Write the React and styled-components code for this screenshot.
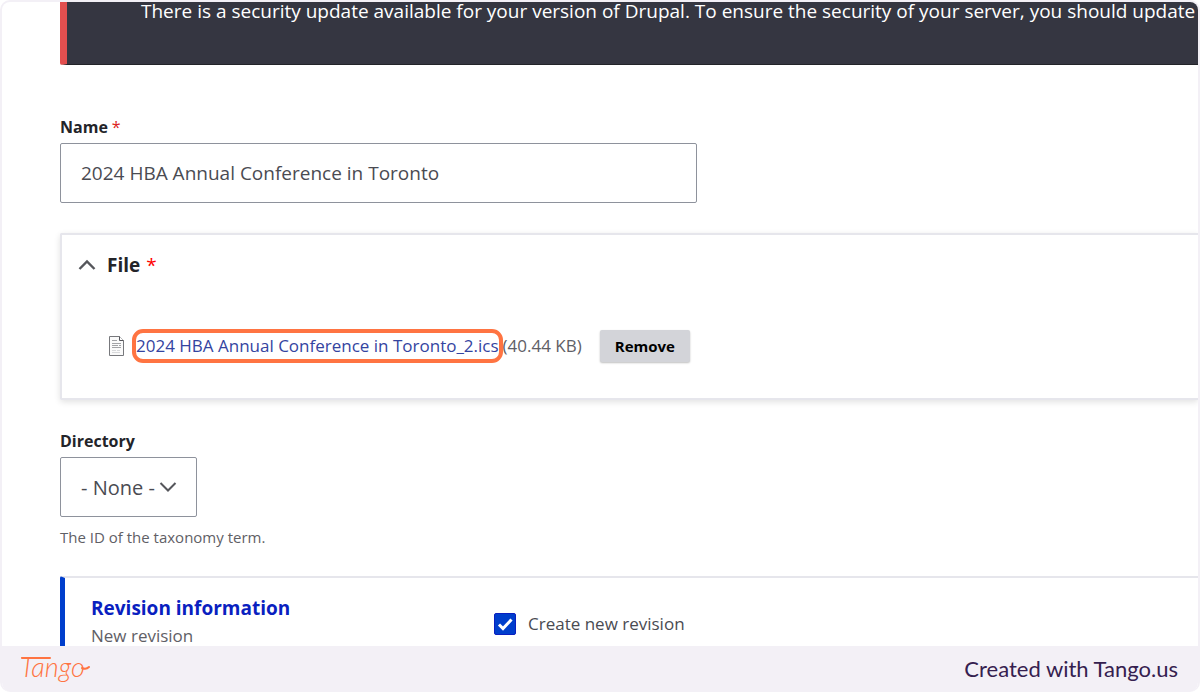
import { useState } from "react";
import styled, { createGlobalStyle } from "styled-components";

const GlobalStyle = createGlobalStyle`
  * {
    box-sizing: border-box;
  }

  body {
    margin: 0;
    background: #ffffff;
    color: #232429;
    font-family: "Open Sans", "Noto Sans", sans-serif;
  }
`;

/* ================= FRAME ================= */

const Frame = styled.div`
  display: flex;
  flex-direction: column;
  height: 100vh;
  border: 2px solid #f3f0f6;
  border-bottom: none;
  border-radius: 10px;
  overflow: hidden;
`;

const Page = styled.main`
  flex: 1;
  min-height: 0;
  padding-left: 58px;
  overflow: hidden;
`;

/* ================= MESSAGE ================= */

const Message = styled.div`
  height: 63px;
  padding-left: 74px;
  border-left: 7px solid #e34f4f;
  border-bottom: 1px solid #232429;
  border-bottom-left-radius: 2px;
  background: #353641;
  color: #ffffff;
  font-size: 19px;
  line-height: 18px;
  white-space: nowrap;
`;

/* ================= FORM ================= */

const Form = styled.form`
  display: flex;
  flex-direction: column;
`;

const Field = styled.div`
  display: flex;
  flex-direction: column;
  align-items: flex-start;
  margin-top: ${(p) => p.$gap}px;
`;

const Label = styled.label`
  margin-bottom: 4px;
  font-size: 16px;
  font-weight: 700;
  line-height: 24px;
`;

const Required = styled.span`
  margin-left: ${(p) => (p.$wide ? 6 : 4)}px;
  color: ${(p) => (p.$wide ? "#ff0000" : "#dc2323")};
  font-weight: 400;
`;

const TextInput = styled.input`
  width: 637px;
  max-width: 100%;
  height: 60px;
  padding: 0 20px;
  border: 1px solid #8e929c;
  border-radius: 2px;
  background: #ffffff;
  color: #4a4b52;
  font-family: inherit;
  font-size: 19px;
`;

const SelectWrap = styled.div`
  position: relative;
  display: flex;
`;

const Select = styled.select`
  width: 137px;
  height: 60px;
  padding: 0 20px;
  border: 1px solid #8e929c;
  border-radius: 2px;
  background: #ffffff;
  color: #4a4b52;
  font-family: inherit;
  font-size: 20px;
  appearance: none;
`;

const SelectArrow = styled.svg`
  position: absolute;
  top: 24px;
  right: 20px;
  pointer-events: none;
`;

const Description = styled.p`
  margin: 8px 0 0;
  color: #5f6066;
  font-size: 15px;
  line-height: 24px;
`;

/* ================= FILE CARD ================= */

const Card = styled.section`
  margin-top: 30px;
  padding: 16px 16px 34px;
  border: 2px solid #e6e6ec;
  border-right: none;
  border-radius: 2px 0 0 2px;
  box-shadow: 0 2px 6px rgba(0, 0, 0, 0.12);
`;

const CardHeader = styled.h2`
  display: flex;
  align-items: center;
  margin: 0;
  font-size: 19px;
  font-weight: 700;
  line-height: 28px;

  svg {
    margin-right: 11px;
  }
`;

const FileRow = styled.div`
  display: flex;
  align-items: center;
  margin-top: 50px;
  margin-bottom: 1px;
  padding-left: 30px;
  font-size: 17px;
  line-height: 24px;
`;

const Highlight = styled.span`
  display: flex;
  align-items: center;
  height: 34px;
  margin-left: 6px;
  border: 4px solid #ff7442;
  border-radius: 11px;
`;

const FileLink = styled.a`
  color: #34449f;
  text-decoration: none;
`;

const FileSize = styled.span`
  color: #5f6066;
`;

const RemoveButton = styled.button`
  height: 32px;
  margin-left: 18px;
  padding: 0 15px;
  border: none;
  border-radius: 2px;
  background: #d3d4d9;
  box-shadow: 0 1px 2px rgba(0, 0, 0, 0.25);
  color: #000000;
  font-family: inherit;
  font-size: 15px;
  font-weight: 700;
`;

/* ================= REVISION ================= */

const Revision = styled.section`
  display: grid;
  grid-template-columns: 403px 1fr;
  margin-top: 27px;
  padding: 16px 0 20px 26px;
  border-top: 2px solid #e6e6ec;
  border-left: 5px solid #003ecc;
  border-top-left-radius: 2px;
`;

const RevisionTitle = styled.h3`
  margin: 0;
  color: #0a1fc0;
  font-size: 19px;
  font-weight: 700;
  line-height: 28px;
`;

const RevisionSummary = styled.p`
  margin: 2px 0 0;
  color: #5f6066;
  font-size: 17px;
  line-height: 24px;
`;

const CheckLabel = styled.label`
  display: flex;
  align-items: center;
  align-self: start;
  gap: 12px;
  margin-top: 18px;
  font-size: 17px;
  line-height: 24px;
  color: #4a4b52;
`;

const CheckHolder = styled.span`
  position: relative;
  display: flex;
`;

const Checkbox = styled.input`
  width: 22px;
  height: 22px;
  margin: 0;
  border: 1px solid #0a1fc0;
  border-radius: 2px;
  background: #ffffff;
  appearance: none;

  &:checked {
    background: #003ecc;
  }
`;

const CheckMark = styled.svg`
  position: absolute;
  inset: 0;
  pointer-events: none;
`;

/* ================= FOOTER ================= */

const Footer = styled.footer`
  display: flex;
  align-items: center;
  justify-content: space-between;
  height: 46px;
  padding: 0 20px 0 18px;
  background: #f3f0f6;
`;

const Logo = styled.svg`
  color: #ff7442;
`;

const Credit = styled.span`
  color: #35204f;
  font-family: Lato, sans-serif;
  font-size: 22px;
  line-height: 28px;
`;

/* ================= COMPONENT ================= */

export default function App() {
  const [name, setName] = useState("2024 HBA Annual Conference in Toronto");
  const [checked, setChecked] = useState(true);

  return (
    <>
      <GlobalStyle />
      <Frame>
        <Page>
          <Message role="alert">
            There is a security update available for your version of Drupal. To ensure the security
            of your server, you should update
          </Message>

          <Form onSubmit={(e) => e.preventDefault()}>
            <Field $gap={50}>
              <Label htmlFor="name">
                Name<Required>*</Required>
              </Label>
              <TextInput id="name" value={name} onChange={(e) => setName(e.target.value)} />
            </Field>

            <Card>
              <CardHeader>
                <svg width="18" height="12" viewBox="0 0 18 12" fill="none">
                  <path d="M1.5 10 9 2.5l7.5 7.5" stroke="#55565b" strokeWidth="2.4" />
                </svg>
                File<Required $wide>*</Required>
              </CardHeader>

              <FileRow>
                <svg width="18" height="22" viewBox="0 0 18 22" fill="none">
                  <path d="M1.5 1.5h10l4 4v15h-14z" fill="#fafafa" stroke="#77787c" />
                  <path d="M11.5 1.5v4h4" fill="#ffffff" stroke="#55565b" />
                  <path
                    d="M4 5.5h5M4 8.5h9M4 10.5h6M11 10.5h2M4 12.5h9"
                    stroke="#a2a3a6"
                  />
                  <path d="M4 15.5h4M9 15.5h3M4 17.5h8" stroke="#d8d9db" />
                </svg>
                <Highlight>
                  <FileLink href="#file">2024 HBA Annual Conference in Toronto_2.ics</FileLink>
                </Highlight>
                <FileSize>(40.44 KB)</FileSize>
                <RemoveButton type="button">Remove</RemoveButton>
              </FileRow>
            </Card>

            <Field $gap={29}>
              <Label htmlFor="directory">Directory</Label>
              <SelectWrap>
                <Select id="directory" defaultValue="none">
                  <option value="none">- None -</option>
                </Select>
                <SelectArrow width="18" height="12" viewBox="0 0 18 12" fill="none">
                  <path d="M1.5 2 9 9.5 16.5 2" stroke="#55565b" strokeWidth="2" />
                </SelectArrow>
              </SelectWrap>
              <Description>The ID of the taxonomy term.</Description>
            </Field>

            <Revision>
              <div>
                <RevisionTitle>Revision information</RevisionTitle>
                <RevisionSummary>New revision</RevisionSummary>
              </div>
              <CheckLabel>
                <CheckHolder>
                  <Checkbox
                    type="checkbox"
                    checked={checked}
                    onChange={(e) => setChecked(e.target.checked)}
                  />
                  {checked && (
                    <CheckMark width="22" height="22" viewBox="0 0 22 22" fill="none">
                      <path d="m5 11.5 4 4L17.5 6.5" stroke="#ffffff" strokeWidth="3" />
                    </CheckMark>
                  )}
                </CheckHolder>
                Create new revision
              </CheckLabel>
            </Revision>
          </Form>
        </Page>

        <Footer>
          <Logo width="72" height="36" viewBox="0 0 72 36" role="img" aria-label="Tango">
            <text
              x="0"
              y="26"
              fill="currentColor"
              fontFamily="Lato, sans-serif"
              fontSize="27"
              fontStyle="italic"
              fontWeight="300"
            >
              Tango
            </text>
            <path
              d="M2 7h28M62 17q4 2 7-1"
              fill="none"
              stroke="currentColor"
              strokeWidth="2"
              strokeLinecap="round"
            />
          </Logo>
          <Credit>Created with Tango.us</Credit>
        </Footer>
      </Frame>
    </>
  );
}
